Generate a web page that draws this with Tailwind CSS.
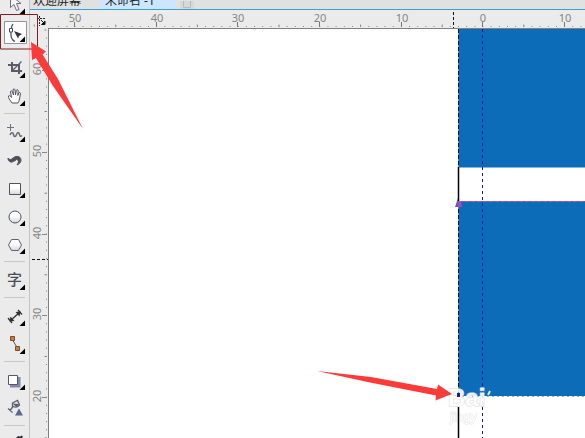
<!DOCTYPE html>
<html lang="zh-CN">
<head>
<meta charset="utf-8">
<meta name="viewport" content="width=device-width, initial-scale=1">
<title>未命名 -1</title>
<script src="https://cdn.jsdelivr.net/npm/@tailwindcss/browser@4"></script>
</head>
<body class="relative flex h-screen overflow-hidden bg-[#ebebeb] font-['Noto_Sans','Noto_Sans_CJK_SC',sans-serif]">
<svg class="absolute size-0" aria-hidden="true">
  <defs>
    <path id="flyout" d="M25 18.500v5.500h-5.500z" fill="#000"/>
    <linearGradient id="shade" x1="0" y1="0" x2="0" y2="1"><stop offset=".4" stop-color="#fff"/><stop offset="1" stop-color="#d4d6de"/></linearGradient>
  </defs>
</svg>

<nav aria-label="工具箱" class="flex w-[30px] shrink-0 flex-col overflow-hidden border-r border-[#c4c4c0]">
  <button aria-label="选择" class="-mt-[10px] h-7 shrink-0"><svg width="29" height="28" fill="none"><path d="M10.500 5v12.500l3.500-3 2.500 6 2.500-1-2.500-6h4.500z" fill="#f6f6f8" stroke="#70707a"/><use href="#flyout"/></svg></button>
  <button aria-label="形状" class="h-7 shrink-0"><svg width="29" height="28" fill="none"><path d="M4.500 3.500h22v22h-22z" fill="#fcfcfc" stroke="#8f979c"/><path d="M13 6c-1 1-1.500 2.500-1.500 4M11 14c-.5 4 1 8 4 9.500" stroke="#50545c" stroke-width="1.300"/><path d="M9.500 10.500h3v3.500h-3z" fill="#fff" stroke="#44505c"/><path d="M14 13l8 3-3 2-1 2.500z" fill="#33363d"/><use href="#flyout"/></svg></button>
  <button aria-label="裁剪" class="mt-2 h-7 shrink-0"><svg width="29" height="28" fill="none"><path d="M8 11h11v9M12 8v9h10" stroke="#5a5c68" stroke-width="2"/><path d="M21.500 7.500L12 17" stroke="#5a5c68" stroke-width="1.300"/><use href="#flyout"/></svg></button>
  <button aria-label="平移" class="h-7 shrink-0"><svg width="29" height="28" fill="none"><path d="M12 21c-2-3-4-5-3.500-7 1-1 2 0 3 1.500L10.500 10c0-1.500 1.500-1.500 2 0l1 3-.5-5c0-1.500 2-1.500 2 0l.5 5 .8-4.500c.3-1.300 2-1 1.900.3L17.800 13.500l1-2.500c.6-1 2-.5 1.700.8L19.500 17c-.4 2-1 3-1.500 4z" fill="#fff" stroke="#50525d"/><use href="#flyout"/></svg></button>
  <hr class="mx-1 my-[3px] h-0.5 shrink-0 border-0 border-t border-[#c9c9c5]">
  <button aria-label="手绘" class="h-7 shrink-0"><svg width="29" height="28" fill="none"><path d="M10.500 6v7M7 9.500h7" stroke="#70727c"/><path d="M10 17c1-3 3-3 3.500-.5s2 3 3 0 2.500-2.500 3 0 1.500 2 2.500 1" stroke="#666873" stroke-width="1.500"/><use href="#flyout"/></svg></button>
  <button aria-label="艺术笔" class="h-7 shrink-0"><svg width="29" height="28" fill="none"><path d="M8 12c1 1.500 2.500 2 4 1 2-2 4-3 6.500-2.500 3.500 1.500 3.500 6.500-1.500 8.500 2-3 2-5-.5-5.500-2 1.500-4 3-6 2.500-1.500-.5-2.500-2-2.500-4z" fill="#4e505b" stroke="#4e505b"/></svg></button>
  <button aria-label="矩形" class="h-7 shrink-0"><svg width="29" height="28" fill="none"><path d="M9.500 9.500h11v11h-11z" fill="url(#shade)" stroke="#50525c"/><use href="#flyout"/></svg></button>
  <button aria-label="椭圆形" class="h-7 shrink-0"><svg width="29" height="28" fill="none"><circle cx="15" cy="15" r="6" fill="url(#shade)" stroke="#50525c"/><use href="#flyout"/></svg></button>
  <button aria-label="多边形" class="h-7 shrink-0"><svg width="29" height="28" fill="none"><path d="M8.500 15l3-5.500h7l3 5.500-3 5.500h-7z" fill="url(#shade)" stroke="#60626c"/><use href="#flyout"/></svg></button>
  <hr class="mx-1 my-[3px] h-0.5 shrink-0 border-0 border-t border-[#c9c9c5]">
  <button aria-label="文本" class="h-7 shrink-0"><svg width="29" height="28"><text x="7" y="19" font-size="15" font-weight="500" font-family="Noto Sans CJK SC" fill="#4c4e59">字</text><use href="#flyout"/></svg></button>
  <hr class="mx-1 my-[3px] h-0.5 shrink-0 border-0 border-t border-[#c9c9c5]">
  <button aria-label="度量" class="h-7 shrink-0"><svg width="29" height="28" fill="none"><path d="M10 19l10-9M8 16l4 5M18 8l4 4.500" stroke="#303238" stroke-width="1.300"/><path d="M9.500 19.500l1-5 4 4.500zM20.500 9.500l-5 .5 4 4.500z" fill="#303238"/><use href="#flyout"/></svg></button>
  <button aria-label="连接器" class="h-7 shrink-0"><svg width="29" height="28" fill="none"><path d="M12 9l6 10" stroke="#555"/><path d="M10.500 6.500h4v4h-4zM15.500 16.500h4v4h-4z" fill="#cf7c3e" stroke="#7d4a2c"/><use href="#flyout"/></svg></button>
  <hr class="mx-1 my-[3px] h-0.5 shrink-0 border-0 border-t border-[#c9c9c5]">
  <button aria-label="阴影" class="h-7 shrink-0"><svg width="29" height="28" fill="none"><path d="M10 11h10.500v10.500H10z" fill="#8286ad"/><path d="M8.500 9.500h9v9h-9z" fill="#fff" stroke="#555867"/><use href="#flyout"/></svg></button>
  <button aria-label="透明度" class="h-7 shrink-0"><svg width="29" height="28" fill="none"><path d="M12.500 9l5-2.500 2 4.500c-2 2.500-5 2.500-7 1zM13 12.500l-3 4M8 14.500l4.500 4" stroke="#5c5f6c" stroke-width="1.300"/><path d="M12.500 9.500l6.500.5-2.500 3z" fill="#555a78"/><path d="M19 14.500l4 7h-8z" fill="#5c6490"/></svg></button>
  <hr class="mx-1 my-[3px] h-0.5 shrink-0 border-0 border-t border-[#c9c9c5]">
  <button aria-label="颜色滴管" class="h-7 shrink-0"><svg width="29" height="28"><path d="M16 8l2-2 2 .5 2-1 1 1.500-2 2-3 2z" fill="#303238"/></svg></button>
</nav>

<main class="flex min-w-0 flex-1 flex-col">
  <header class="flex h-[10px] shrink-0 items-end overflow-hidden border-b border-[#35a3d6] bg-[#e1e1e1] text-xs leading-4 text-[#222]">
    <button class="w-[70px] shrink-0 px-[3px] text-left whitespace-nowrap">欢迎屏幕</button>
    <button class="w-[76px] shrink-0 bg-[#cce6ff] px-[5px] text-left whitespace-nowrap">未命名 -1</button>
    <button aria-label="新建" class="ml-1 h-2 w-[14px] shrink-0 bg-[#d8d8d8]"><svg width="14" height="8" fill="none" stroke="#bbb"><path d="M3.500 0v6.500h7V0"/></svg></button>
  </header>
  <svg class="h-[18px] w-full shrink-0" aria-label="水平标尺">
    <g transform="translate(-30 -10)">
      <path d="M58.200 26.500H2000" stroke="#888" stroke-dasharray="1 7.160"/>
      <path d="M33.700 25.500H2000" stroke="#888" stroke-width="2" stroke-dasharray="1 80.600"/>
      <path d="M74.500 22v5M156.500 22v5M237.500 22v5M319.500 22v5M401.500 22v5M482.500 22v5M564.500 22v5" stroke="#777"/>
      <g font-size="11" fill="#858585" text-anchor="middle"><text x="75" y="22">50</text><text x="157" y="22">40</text><text x="238" y="22">30</text><text x="320" y="22">20</text><text x="402" y="22">10</text><text x="483" y="22">0</text><text x="565" y="22">10</text></g>
      <path d="M453.500 12v16" stroke="#111" stroke-dasharray="3 2"/>
      <path d="M37 18.500h9M39.500 16v10" stroke="#222" stroke-dasharray="2 1"/><path d="M41 20l3 3m1-2v3.500h-3.500z" stroke="#111" fill="#111"/>
    </g>
  </svg>
  <div class="flex min-h-0 flex-1">
    <svg class="h-full w-[18px] shrink-0" aria-label="垂直标尺">
      <g transform="translate(-30 -28)">
        <path d="M46.500 37.600V2000" stroke="#888" stroke-dasharray="1 7.160"/>
        <path d="M45.500 29.500V2000" stroke="#888" stroke-width="2" stroke-dasharray="1 80.600"/>
        <path d="M42 70.500h5M42 152.500h5M42 234.500h5M42 315.500h5M42 397.500h5" stroke="#888"/>
        <g font-size="11" fill="#858585" text-anchor="middle"><text transform="translate(41 69) rotate(-90)">60</text><text transform="translate(41 151) rotate(-90)">50</text><text transform="translate(41 233) rotate(-90)">40</text><text transform="translate(41 314) rotate(-90)">30</text><text transform="translate(41 396) rotate(-90)">20</text></g>
        <path d="M32 259.500h16" stroke="#111" stroke-dasharray="3 2"/>
      </g>
    </svg>
    <svg class="h-full min-w-0 flex-1 border-t border-l border-[#808080] bg-white" aria-label="绘图窗口">
      <g transform="translate(-49 -29)">
        <path d="M459 29h2000v138.500H459zM459 201h2000v195.500H459z" fill="#0c6cb8"/>
        <path d="M459 201.500h2000" stroke="#5a62b0"/>
        <path d="M459 201.500h2000" stroke="#c4529f" stroke-dasharray="4 2"/>
        <path d="M459 396.500h2000" stroke="#fff" stroke-dasharray="3 2"/>
        <path d="M458.500 29v138M458.500 201v195" stroke="#8d8d98"/>
        <path d="M458.500 29V396" stroke="#111" stroke-dasharray="4 2"/>
        <path d="M482.500 29v2000" stroke="#1515b0" stroke-dasharray="3 3"/>
        <path d="M455 207l3-9 2 9z" fill="#4d62b8"/><path d="M458 202h3l1 5h-4z" fill="#c23abf"/>
        <g font-family="Liberation Sans" fill="#fff" stroke-linejoin="round" paint-order="stroke"><text x="448" y="406" font-size="24" font-weight="700" fill-opacity=".9" stroke="#dedede" stroke-opacity=".8" stroke-width="1.500">Bai</text><text x="450" y="421" font-size="13" stroke="#e6e6e6" stroke-width="1">jingy</text></g>
        <path d="M458.500 167v34M458.500 407v2000" stroke="#000" stroke-width="1.500"/>
        <path d="M490 391l-2 4" stroke="#e6eef5" stroke-width="2"/>
        <path d="M317 371l54 6 66 12 1-4.500 14 9.500-16.500 6.500 .5-5-66-13z" fill="#fb3a3a"/>
        <path d="M457 393h3v4h-3z" fill="#172383"/>
      </g>
    </svg>
  </div>
</main>

<svg class="pointer-events-none absolute top-0 left-0" width="90" height="135" fill="none" aria-hidden="true">
  <path d="M.5 14.500h37v34.500H.5z" stroke="#861c20"/>
  <path d="M31 42l15 9.500-3.500 3L58 79l25 50-30-43-17-28-4 2z" fill="#fb3a3a"/>
</svg>
</body>
</html>
